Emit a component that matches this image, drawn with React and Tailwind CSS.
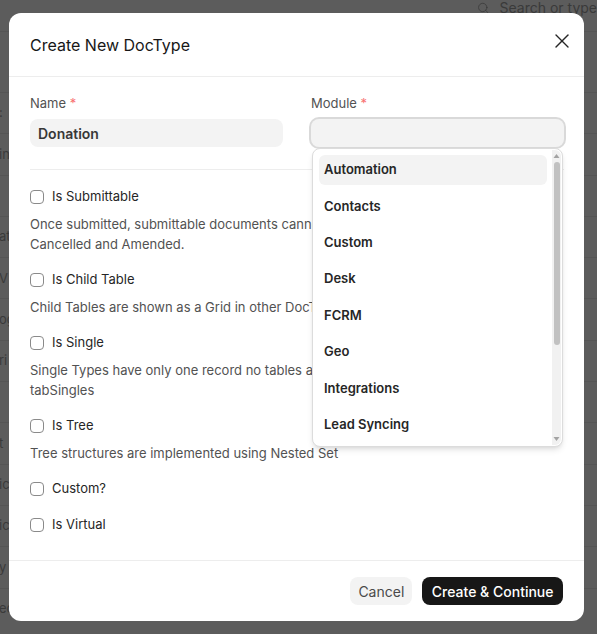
import { X, Search } from "lucide-react";

// rows of the list page sitting behind the dialog
const BG_LEFT = [":", "in", "", "at", "V", "og", "ri", "", "t", "ic", "ic", "y I", "ec"];

const FLAGS = [
  {
    label: "Is Submittable",
    desc: "Once submitted, submittable documents cannot be changed. They can only be Cancelled and Amended.",
  },
  { label: "Is Child Table", desc: "Child Tables are shown as a Grid in other DocTypes" },
  {
    label: "Is Single",
    desc: "Single Types have only one record no tables associated. Values are stored in tabSingles",
  },
  { label: "Is Tree", desc: "Tree structures are implemented using Nested Set" },
  { label: "Custom?" },
  { label: "Is Virtual" },
];

const MODULES = ["Automation", "Contacts", "Custom", "Desk", "FCRM", "Geo", "Integrations", "Lead Syncing"];

function Backdrop() {
  return (
    <div className="h-[634px] w-full overflow-hidden bg-[#5c5c5c] text-[13px] text-[#3a3a3a]">
      <div className="flex h-8 items-center justify-end border-b border-[#555555]">
        <div className="-mt-4 flex w-[120px] items-center gap-2.5">
          <Search size={16} strokeWidth={1.5} />
          <span className="whitespace-nowrap text-[14px]">Search or type</span>
        </div>
      </div>
      <div className="mt-[60px]">
        {BG_LEFT.map((t, i) => (
          <div key={i} className="flex h-[41.3px] items-center border-t border-[#555555]">
            <span className="-ml-px whitespace-nowrap">{t}</span>
          </div>
        ))}
      </div>
    </div>
  );
}

function Checkbox() {
  return <span className="h-[14px] w-[14px] shrink-0 rounded-[4px] border border-[#8a8a8a] bg-white" />;
}

function ModuleMenu() {
  return (
    <div className="absolute left-px top-[29px] z-10 flex h-[299px] w-[251px] rounded-lg border border-[#dcdcdc] bg-white shadow-md">
      <div className="flex flex-1 flex-col gap-[6.4px] p-1.5 pr-[5px]">
        {MODULES.map((m, i) => (
          <div
            key={m}
            className={`flex h-[30px] shrink-0 items-center rounded-md px-[5px] text-[13px] font-semibold text-[#262626] ${
              i === 0 ? "bg-[#f3f3f3]" : ""
            }`}
          >
            {m}
          </div>
        ))}
      </div>
      {/* native-looking scrollbar */}
      <div className="my-px mr-px flex w-[9px] flex-col items-center rounded-r-md bg-[#f1f1f1]">
        <svg width="7" height="6" viewBox="0 0 7 6" className="mt-[3px]">
          <path d="M3.5 1 L6.5 5 L0.5 5 Z" fill="#a3a3a3" />
        </svg>
        <div className="mt-[3px] h-[183px] w-[6px] rounded-full bg-[#c1c1c1]" />
        <div className="flex-1" />
        <svg width="7" height="6" viewBox="0 0 7 6" className="mb-[3px]">
          <path d="M0.5 1 L6.5 1 L3.5 5 Z" fill="#a3a3a3" />
        </svg>
      </div>
    </div>
  );
}

export default function App() {
  return (
    <div className="relative h-[634px] w-[597px] overflow-hidden font-['Inter','Noto_Sans',sans-serif]">
      <Backdrop />

      <div className="absolute left-[9px] top-[13px] flex h-[608px] w-[575px] flex-col rounded-xl bg-white">
        {/* header */}
        <div className="flex h-[64px] shrink-0 items-center justify-between border-b border-[#ededed] pl-[21px] pr-[10px]">
          <h2 className="text-[16px] text-[#171717]">Create New DocType</h2>
          <X size={24} strokeWidth={1.4} className="-mt-2 text-[#262626]" />
        </div>

        {/* body */}
        <div className="flex-1 pl-[21px] pr-5 pt-4">
          <div className="grid grid-cols-2 gap-7">
            <div>
              <div className="mb-1.5 text-[13px] leading-5 text-[#525252]">
                Name <span className="text-[#f87171]">*</span>
              </div>
              <div className="flex h-7 items-center rounded-lg bg-[#f3f3f3] px-2 text-[14px] font-semibold text-[#383838]">
                Donation
              </div>
            </div>
            <div>
              <div className="mb-1.5 text-[13px] leading-5 text-[#525252]">
                Module <span className="text-[#f87171]">*</span>
              </div>
              <div className="relative">
                <div className="h-7 rounded-lg bg-[#f3f3f3] ring-2 ring-[#d9d9d9]" />
                <ModuleMenu />
              </div>
            </div>
          </div>

          <div className="mt-[22px] border-t border-[#ededed]" />

          <div className="flex flex-col gap-4 pt-[17px]">
            {FLAGS.map((f) => (
              <div key={f.label}>
                <div className="flex h-5 items-center gap-2">
                  <Checkbox />
                  <span className="text-[13px] text-[#262626]">{f.label}</span>
                </div>
                {f.desc && <p className="mt-[7px] text-[13px] leading-5 text-[#525252]">{f.desc}</p>}
              </div>
            ))}
          </div>
        </div>

        {/* footer */}
        <div className="flex shrink-0 justify-end gap-2.5 border-t border-[#ededed] py-4 pr-[21px]">
          <button className="h-7 rounded-lg bg-[#f3f3f3] px-2 text-[14px] text-[#4a4a4a]">Cancel</button>
          <button className="h-7 rounded-lg bg-[#171717] px-[9.5px] text-[14px] font-medium text-white">
            Create &amp; Continue
          </button>
        </div>
      </div>
    </div>
  );
}
